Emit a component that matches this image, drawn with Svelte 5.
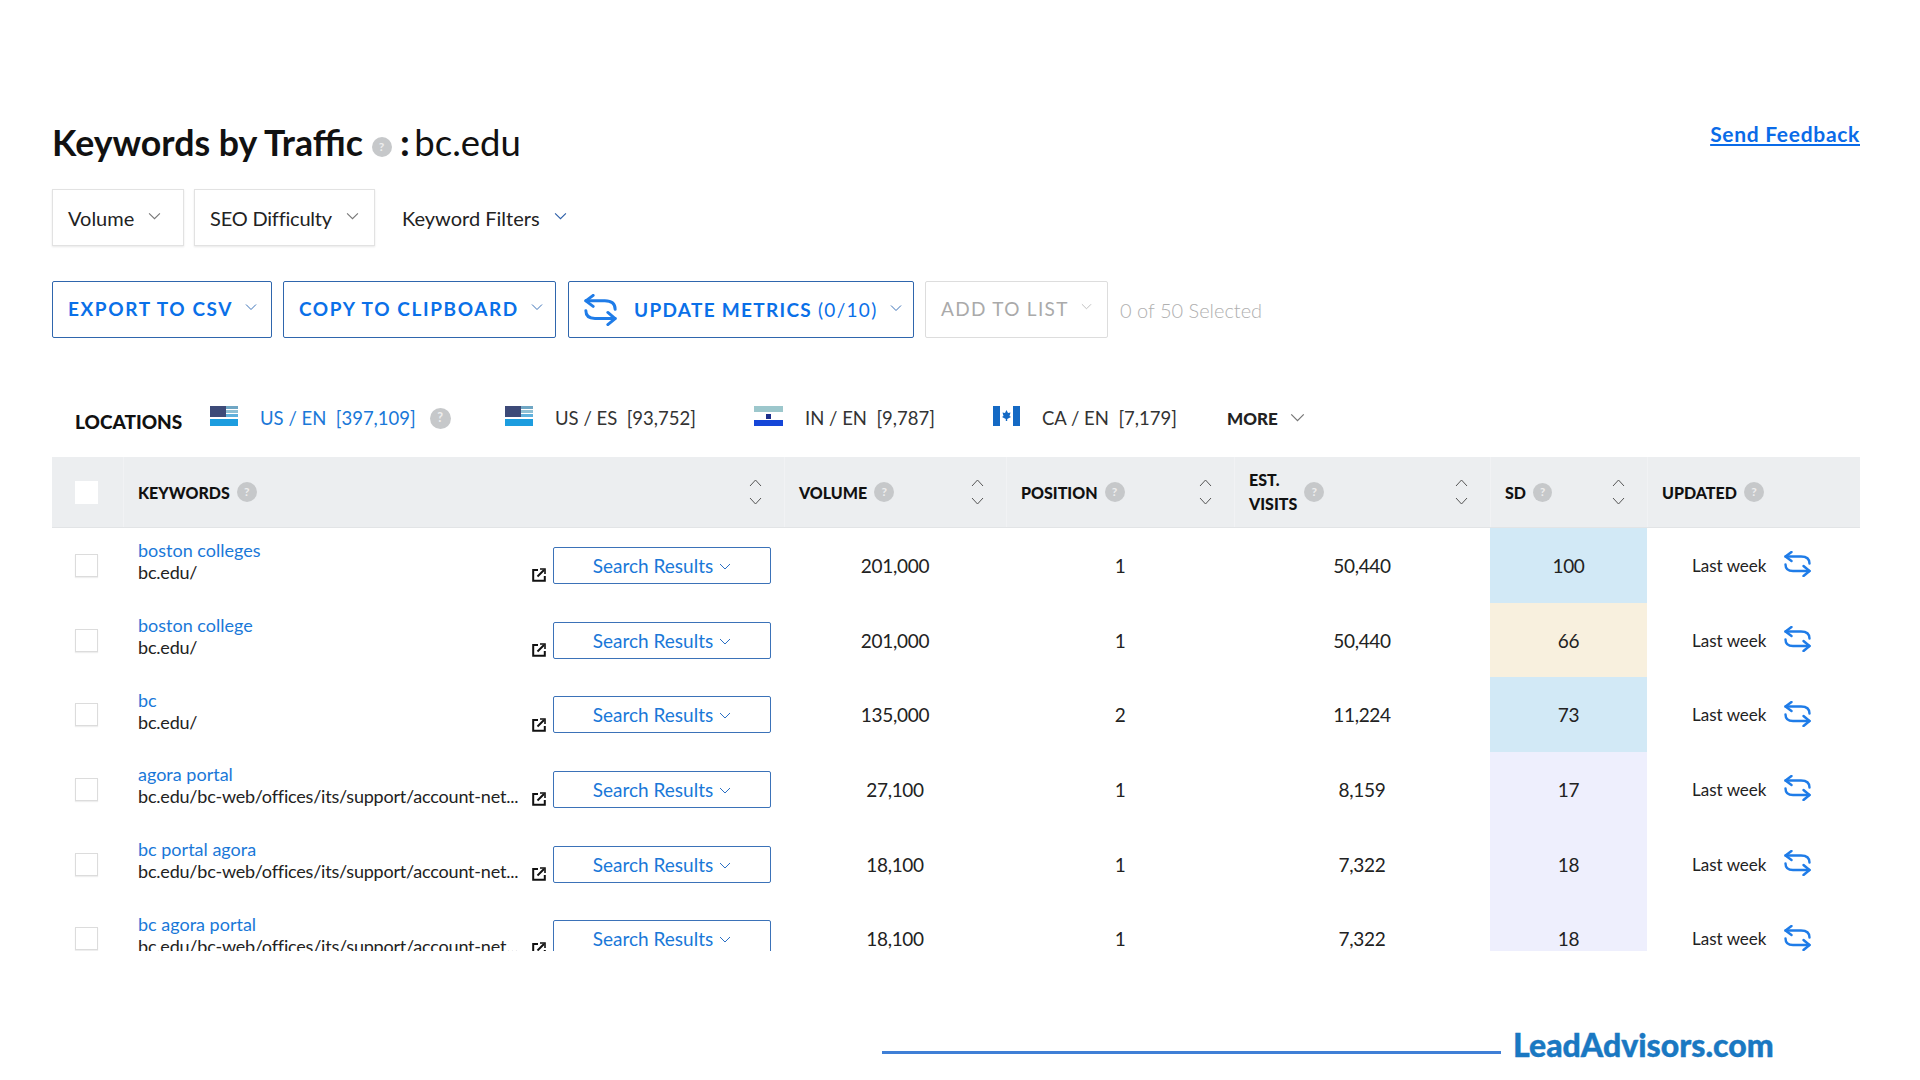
<script>
  const longUrl = 'bc.edu/bc-web/offices/its/support/account-net...';
  const rows = [
    { kw: 'boston colleges', url: 'bc.edu/', vol: '201,000', pos: 1, visits: '50,440', sd: 100 },
    { kw: 'boston college', url: 'bc.edu/', vol: '201,000', pos: 1, visits: '50,440', sd: 66 },
    { kw: 'bc', url: 'bc.edu/', vol: '135,000', pos: 2, visits: '11,224', sd: 73 },
    { kw: 'agora portal', url: longUrl, vol: '27,100', pos: 1, visits: '8,159', sd: 17 },
    { kw: 'bc portal agora', url: longUrl, vol: '18,100', pos: 1, visits: '7,322', sd: 18 },
    { kw: 'bc agora portal', url: longUrl, vol: '18,100', pos: 1, visits: '7,322', sd: 18 }
  ];

  function sdClass(sd) {
    if (sd >= 70) return 'hard';
    if (sd >= 50) return 'mid';
    return 'easy';
  }
</script>

{#snippet chevron(w, h, color)}
  <svg class="chev" width={w} height={h} viewBox="0 0 12 7" fill="none" stroke={color} stroke-width="1">
    <path d="M1 1 L6 6 L11 1" />
  </svg>
{/snippet}

{#snippet help(size)}
  <span class="help" style="width:{size}px;height:{size}px;font-size:{size * 0.6}px">?</span>
{/snippet}

{#snippet sync(w, h)}
  <svg class="sync" width={w} height={h} viewBox="0 0 27 26" fill="none" stroke="#1f7ce8" stroke-width="2.4" stroke-linecap="round" stroke-linejoin="round">
    <path d="M7.5 1 L1.5 5.5 L7.5 10" />
    <path d="M1.5 5.5 H17 Q25.5 5.5 25.5 12.5" />
    <path d="M1.5 13.5 Q1.5 20 9 20 H25.5" />
    <path d="M19.5 15 L25.5 20 L19.5 25" />
  </svg>
{/snippet}

{#snippet sort()}
  <span class="sort">
    <svg width="13" height="8" viewBox="0 0 13 8" fill="none" stroke="#555" stroke-width="1"><path d="M1 7 L6.5 1 L12 7" /></svg>
    <svg width="13" height="8" viewBox="0 0 13 8" fill="none" stroke="#555" stroke-width="1"><path d="M1 1 L6.5 7 L12 1" /></svg>
  </span>
{/snippet}

{#snippet usFlag()}
  <svg class="flag" width="28" height="20" viewBox="0 0 28 20">
    <rect width="28" height="20" fill="#fff" />
    <rect width="16" height="11" fill="#3d4a78" />
    <rect x="16" width="12" height="3" fill="#6fa6c4" />
    <rect x="16" y="4" width="12" height="3" fill="#8fc0d4" />
    <rect x="16" y="8" width="12" height="3" fill="#5fb0dc" />
    <rect y="13" width="28" height="7" fill="#1d9ddf" />
  </svg>
{/snippet}

<div class="page">
  <div class="title-row">
    <h1>Keywords by Traffic {@render help(20)} <b>:</b> <span class="domain">bc.edu</span></h1>
    <a class="feedback" href="#top">Send Feedback</a>
  </div>

  <div class="filters">
    <div class="filter box volume">Volume {@render chevron(13, 8, '#777')}</div>
    <div class="filter box seo">SEO Difficulty {@render chevron(13, 8, '#777')}</div>
    <div class="filter kwf">Keyword Filters {@render chevron(13, 8, '#2c5fa8')}</div>
  </div>

  <div class="actions">
    <button class="act export"><span>EXPORT TO CSV</span> {@render chevron(12, 8, '#3b72b8')}</button>
    <button class="act copy"><span>COPY TO CLIPBOARD</span> {@render chevron(12, 8, '#3b72b8')}</button>
    <button class="act update">
      {@render sync(33, 32)}
      <span class="update-text">UPDATE METRICS <em>(0/10)</em></span>
      {@render chevron(12, 8, '#3b72b8')}
    </button>
    <button class="act add"><span>ADD TO LIST</span> {@render chevron(11, 7, '#bbb')}</button>
    <span class="selected">0 of 50 Selected</span>
  </div>

  <div class="locations">
    <span class="loc-label">LOCATIONS</span>
    <span class="loc us-en">
      {@render usFlag()}
      <span class="loc-text active">US / EN&nbsp; [397,109]</span>
      {@render help(21)}
    </span>
    <span class="loc us-es">
      {@render usFlag()}
      <span class="loc-text">US / ES&nbsp; [93,752]</span>
    </span>
    <span class="loc in-en">
      <svg class="flag" width="29" height="20" viewBox="0 0 29 20">
        <rect width="29" height="6" fill="#9cc7cc" />
        <rect y="14" width="29" height="6" fill="#1546d8" />
        <rect x="12" y="8" width="5" height="5" fill="#1c2f8c" />
      </svg>
      <span class="loc-text">IN / EN&nbsp; [9,787]</span>
    </span>
    <span class="loc ca-en">
      <svg class="flag" width="27" height="20" viewBox="0 0 27 20">
        <rect width="7" height="20" fill="#1469c4" />
        <rect x="20" width="7" height="20" fill="#1469c4" />
        <path d="M13.5 4 L15 7 L17.5 6.5 L16.5 10 L18 11 L14.2 13 V15 H12.8 V13 L9 11 L10.5 10 L9.5 6.5 L12 7 Z" fill="#1469c4" />
      </svg>
      <span class="loc-text">CA / EN&nbsp; [7,179]</span>
    </span>
    <span class="more">MORE {@render chevron(15, 9, '#777')}</span>
  </div>

  <div class="table">
    <div class="row head">
      <div class="cell check"><span class="cb white"></span></div>
      <div class="cell th kw-head"><span class="lbl">KEYWORDS</span>{@render help(20)}{@render sort()}</div>
      <div class="cell th"><span class="lbl">VOLUME</span>{@render help(20)}{@render sort()}</div>
      <div class="cell th"><span class="lbl">POSITION</span>{@render help(20)}{@render sort()}</div>
      <div class="cell th"><span class="lbl two">EST.<br />VISITS</span>{@render help(20)}{@render sort()}</div>
      <div class="cell th"><span class="lbl">SD</span>{@render help(19)}{@render sort()}</div>
      <div class="cell th last"><span class="lbl">UPDATED</span>{@render help(20)}</div>
    </div>

    {#each rows as r}
      <div class="row body">
        <div class="cell check"><span class="cb"></span></div>
        <div class="cell kw">
          <div class="kw-text">
            <a href="#top">{r.kw}</a>
            <span class="url">{r.url}</span>
          </div>
          <svg class="ext" width="14" height="14" viewBox="0 0 14 14" fill="none" stroke="#111" stroke-width="2">
            <path d="M6 2 H1.2 V12.8 H12.8 V8" />
            <path d="M5.5 8.5 L12 2" />
            <path d="M8 1 H13 V6" stroke-width="1.6" />
          </svg>
          <button class="results">Search Results {@render chevron(12, 7, '#2a6fc4')}</button>
        </div>
        <div class="cell num">{r.vol}</div>
        <div class="cell num">{r.pos}</div>
        <div class="cell num">{r.visits}</div>
        <div class="cell num {sdClass(r.sd)}">{r.sd}</div>
        <div class="cell updated"><span>Last week</span>{@render sync(27, 26)}</div>
      </div>
    {/each}
  </div>

  <div class="footer">
    <span class="rule"></span>
    <span class="brand">LeadAdvisors.com</span>
  </div>
</div>

<style>
  :global(body) {
    margin: 0;
    background: #fff;
    font-family: Lato, "Open Sans", sans-serif;
    color: #222;
  }
  .page {
    width: 1920px;
    height: 1080px;
    box-sizing: border-box;
    padding: 124px 60px 0 52px;
    overflow: hidden;
  }
  .help {
    display: inline-flex;
    align-items: center;
    justify-content: center;
    flex: none;
    border-radius: 50%;
    background: #c6c8ca;
    color: #eee;
    font-weight: 700;
    line-height: 1;
    vertical-align: middle;
  }
  .chev {
    flex: none;
  }
  .sync {
    flex: none;
  }

  .title-row {
    display: flex;
    justify-content: space-between;
    align-items: flex-start;
    height: 44px;
  }
  h1 {
    margin: -4px 0 0;
    font-size: 35.7px;
    line-height: 44px;
    font-weight: 700;
    color: #111;
    white-space: nowrap;
  }
  h1 b {
    font-weight: 900;
  }
  .domain {
    font-size: 36.5px;
    font-weight: 400;
    margin-left: -4px;
  }
  .feedback {
    font-size: 21px;
    font-weight: 700;
    line-height: 24px;
    margin-top: -2px;
    color: #0a6be8;
    letter-spacing: 0.7px;
  }

  .filters {
    display: flex;
    align-items: stretch;
    height: 57px;
    margin-top: 21px;
    font-size: 20px;
    color: #222;
  }
  .filter {
    display: flex;
    align-items: center;
    box-sizing: border-box;
  }
  .filter .chev {
    margin: -3px 0 0 14px;
  }
  .box {
    border: 1px solid #e2e2e2;
    box-shadow: 0 1px 2px #e8e8e8;
    padding-left: 15px;
  }
  .volume {
    width: 132px;
  }
  .seo {
    width: 181px;
    margin-left: 10px;
    letter-spacing: -0.2px;
  }
  .kwf {
    margin-left: 27px;
  }

  .actions {
    display: flex;
    align-items: stretch;
    height: 57px;
    margin-top: 35px;
    gap: 11px;
  }
  .act {
    display: flex;
    align-items: center;
    box-sizing: border-box;
    background: #fff;
    border: 1.5px solid #2f66ad;
    border-radius: 2px;
    padding: 0 0 3px 15px;
    font: 700 19px Lato, sans-serif;
    letter-spacing: 1.6px;
    color: #0a70e8;
    white-space: nowrap;
  }
  .act .chev {
    margin-left: 12px;
    margin-top: -3px;
  }
  .export {
    width: 220px;
  }
  .copy {
    width: 273px;
  }
  .update {
    width: 346px;
    margin-left: 1px;
    padding-bottom: 0;
  }
  .update-text {
    margin-left: 17px;
    letter-spacing: 1.3px;
  }
  .update .chev {
    margin-left: 12px;
  }
  .update-text em {
    font-style: normal;
    font-weight: 400;
  }
  .add {
    width: 183px;
    border: 1px solid #ddd;
    color: #aaa;
    font-weight: 400;
    letter-spacing: 1.3px;
  }
  .selected {
    align-self: center;
    margin-left: 1px;
    font-size: 20px;
    color: #b0b0b0;
    font-weight: 300;
  }

  .locations {
    display: flex;
    align-items: center;
    height: 38px;
    margin: 61px 0 20px;
    padding-left: 23px;
    font-size: 18.5px;
  }
  .loc-label {
    font-weight: 900;
    font-size: 19px;
    color: #111;
    width: 135px;
    margin-top: 7px;
  }
  .loc {
    display: flex;
    align-items: center;
  }
  .flag {
    flex: none;
    margin-top: -4px;
  }
  .loc-text {
    margin-left: 22px;
    white-space: nowrap;
    color: #333;
  }
  .loc-text.active {
    color: #1a78d8;
  }
  .loc .help {
    margin-left: 14px;
  }
  .us-en {
    width: 295px;
  }
  .us-es {
    width: 249px;
  }
  .in-en {
    width: 239px;
  }
  .ca-en {
    width: 234px;
  }
  .more {
    display: flex;
    align-items: center;
    font-size: 17px;
    font-weight: 900;
    color: #222;
  }
  .more .chev {
    margin: -2px 0 0 12px;
  }

  .table {
    height: 494px;
    overflow: hidden;
  }
  .row {
    display: grid;
    grid-template-columns: 71px 661px 222px 228px 256px 157px 213px;
  }
  .head {
    height: 71px;
    background: #eceef0;
    border-bottom: 1px solid #e2e4e6;
    box-sizing: border-box;
  }
  .body {
    height: 74.7px;
  }
  .cell {
    display: flex;
    align-items: center;
    box-sizing: border-box;
    min-width: 0;
  }
  .check {
    padding-left: 23px;
  }
  .cb {
    display: block;
    box-sizing: border-box;
    width: 23px;
    height: 23px;
    border: 1px solid #dcdcdc;
    box-shadow: 0 1px 1px #eee;
    background: #fff;
  }
  .cb.white {
    border: none;
    box-shadow: none;
  }
  .th {
    position: relative;
    padding-left: 14px;
    border-left: 1px solid #f1f2f4;
  }
  .lbl {
    font-size: 16px;
    font-weight: 900;
    color: #111;
  }
  .lbl.two {
    line-height: 24px;
  }
  .th .help {
    margin-left: 7px;
  }
  .sort {
    display: flex;
    flex-direction: column;
    gap: 10px;
    position: absolute;
    top: 50%;
    right: 22px;
    transform: translateY(-50%);
  }
  .kw {
    padding-left: 15px;
  }
  .kw-text {
    width: 394px;
    flex: none;
    margin-top: -8px;
    box-sizing: border-box;
  }
  .kw-text a {
    display: block;
    font-size: 18px;
    line-height: 23px;
    color: #1a78d8;
    text-decoration: none;
  }
  .url {
    display: block;
    font-size: 18px;
    line-height: 21px;
    color: #222;
    white-space: nowrap;
    letter-spacing: -0.2px;
  }
  .ext {
    flex: none;
    margin-top: 20px;
  }
  .results {
    display: flex;
    align-items: center;
    justify-content: center;
    flex: none;
    width: 218px;
    height: 37px;
    margin-left: 7px;
    background: #fff;
    border: 1.5px solid #3b72b8;
    border-radius: 2px;
    font: 400 19px Lato, sans-serif;
    color: #1a78d8;
    padding: 0;
  }
  .results .chev {
    margin-left: 6px;
    margin-top: 2px;
  }
  .num {
    justify-content: center;
    font-size: 19px;
    letter-spacing: -0.3px;
    color: #222;
  }
  .hard {
    background: #d2e9f6;
  }
  .mid {
    background: #f8f0de;
  }
  .easy {
    background: #eeeffd;
  }
  .updated {
    padding-left: 45px;
    font-size: 17px;
    color: #222;
  }
  .updated .sync {
    margin-left: 18px;
    margin-top: -2px;
  }

  .footer {
    display: flex;
    align-items: flex-end;
    margin: 82px 0 0 830px;
    height: 24px;
  }
  .rule {
    display: block;
    width: 619px;
    height: 3px;
    background: #3f7fd6;
    margin-bottom: 3px;
  }
  .brand {
    margin-left: 12px;
    font-size: 32px;
    line-height: 24px;
    font-weight: 900;
    color: #1a78c2;
    -webkit-text-stroke: 0.4px #1a78c2;
  }
</style>
